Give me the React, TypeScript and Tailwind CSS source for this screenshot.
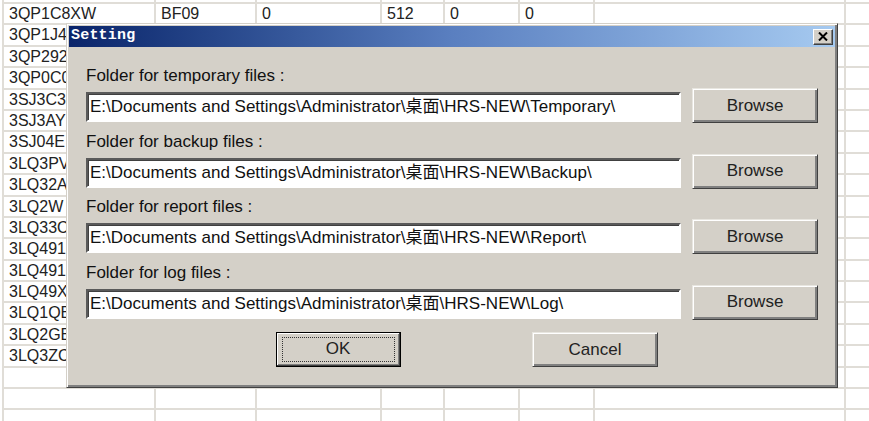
import React from "react";

const COLS = [152, 101, 125, 63, 75, 75, 251];

const FIRST_COL = [
  "3QP1C8XW",
  "3QP1J4",
  "3QP292",
  "3QP0C0",
  "3SJ3C3",
  "3SJ3AY",
  "3SJ04E",
  "3LQ3PV",
  "3LQ32A",
  "3LQ2W",
  "3LQ33C",
  "3LQ491",
  "3LQ491",
  "3LQ49X",
  "3LQ1QE",
  "3LQ2GE",
  "3LQ3ZC",
];

const ROWS: string[][] = [
  [],
  ["3QP1C8XW", "BF09", "0", "512", "0", "0"],
  ...FIRST_COL.slice(1).map((c) => [c]),
  [],
  [],
  [],
];

const FOLDERS = [
  { label: "Folder for temporary files :", path: "E:\\Documents and Settings\\Administrator\\桌面\\HRS-NEW\\Temporary\\" },
  { label: "Folder for backup files :", path: "E:\\Documents and Settings\\Administrator\\桌面\\HRS-NEW\\Backup\\" },
  { label: "Folder for report files :", path: "E:\\Documents and Settings\\Administrator\\桌面\\HRS-NEW\\Report\\" },
  { label: "Folder for log files :", path: "E:\\Documents and Settings\\Administrator\\桌面\\HRS-NEW\\Log\\" },
];

const font = "font-['Liberation_Sans','Noto_Sans_CJK_SC',sans-serif]";

function Sheet() {
  return (
    <div className="ml-[2px] mt-[-17.4px] flex flex-col border-l-2 border-[#e0ddd7]">
      {ROWS.map((row, i) => (
        <div key={i} className="flex h-[21.4px] shrink-0 border-b-2 border-[#e0ddd7]">
          {COLS.map((w, j) => (
            <div
              key={j}
              style={{ width: w }}
              className="shrink-0 overflow-hidden whitespace-nowrap border-r-2 border-[#e0ddd7] pl-[5px] text-[16px] leading-[20px] text-[#222]"
            >
              {row[j] ?? ""}
            </div>
          ))}
          <div className="flex-1" />
        </div>
      ))}
    </div>
  );
}

function RaisedButton({ children, isDefault }: { children: React.ReactNode; isDefault?: boolean }) {
  if (isDefault) {
    return (
      <div className="h-[35px] w-[125px] shrink-0 border border-black">
        <div className="flex h-full w-full items-center justify-center border-r border-b border-[#404040] bg-[#d4d0c8] shadow-[inset_1px_1px_0_#fff,inset_-1px_-1px_0_#808080]">
          <div className="flex h-[25px] w-[113px] items-center justify-center border border-dotted border-[#333] text-[17px] text-[#222]">
            {children}
          </div>
        </div>
      </div>
    );
  }
  return (
    <div className="flex h-[35px] w-[126px] shrink-0 items-center justify-center border border-t-[#e8e6e0] border-l-[#e8e6e0] border-r-[#404040] border-b-[#404040] bg-[#d4d0c8] text-[17px] text-[#222] shadow-[inset_1px_1px_0_#fff,inset_-2px_-2px_0_#808080]">
      {children}
    </div>
  );
}

function Dialog() {
  return (
    <div
      className={`absolute left-[66px] top-[23px] flex h-[365px] w-[772px] flex-col border border-t-[#d4d0c8] border-l-[#d4d0c8] border-r-[#404040] border-b-[#404040] bg-[#d4d0c8] p-[2px] shadow-[inset_1px_1px_0_#fff,inset_-2px_-2px_0_#808080] ${font}`}
    >
      <div className="flex h-[21px] shrink-0 items-center justify-between bg-gradient-to-r from-[#0a246a] via-[#5a7fc0] to-[#a6caf0] pl-[2px] pr-[2px]">
        <span className="font-['Liberation_Mono',monospace] text-[15px] font-bold tracking-[0.2px] text-white">Setting</span>
        <div className="flex h-[16px] w-[20px] items-center justify-center border border-t-white border-l-white border-r-[#404040] border-b-[#404040] bg-[#d4d0c8] shadow-[inset_-1px_-1px_0_#808080]">
          <svg width="10" height="9" viewBox="0 0 10 9">
            <path d="M1 0.5 L9 8.5 M9 0.5 L1 8.5" stroke="#000" strokeWidth="2" />
          </svg>
        </div>
      </div>

      <div className="flex flex-col pl-[17px] pt-[19px]">
        {FOLDERS.map((f) => (
          <div key={f.label} className="flex h-[65.5px] shrink-0 flex-col">
            <div className="h-[20px] text-[17px] leading-[20px] text-[#111]">{f.label}</div>
            <div className="mt-[2px] flex items-start gap-[11px]">
              <div className="mt-[4px] flex h-[30px] w-[595px] items-center overflow-hidden border-2 border-t-[#5a5a5a] border-l-[#5a5a5a] border-r-white border-b-white bg-white pl-[2px] shadow-[inset_1px_1px_0_#404040]">
                <span className="whitespace-nowrap text-[17px] text-[#111]">{f.path}</span>
              </div>
              <RaisedButton>Browse</RaisedButton>
            </div>
          </div>
        ))}
        <div className="mt-[4px] flex gap-[131px] pl-[190px]">
          <RaisedButton isDefault>OK</RaisedButton>
          <RaisedButton>Cancel</RaisedButton>
        </div>
      </div>
    </div>
  );
}

export default function App() {
  return (
    <div className={`relative h-[421px] w-[869px] overflow-hidden bg-white ${font}`}>
      <Sheet />
      <Dialog />
    </div>
  );
}
